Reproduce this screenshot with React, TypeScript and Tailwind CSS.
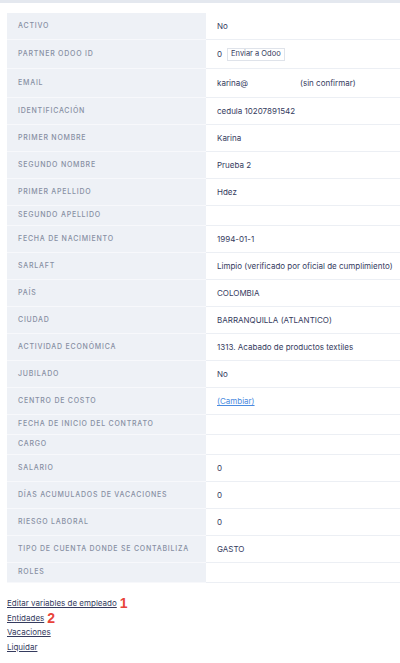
import React from 'react'

type Row = {
  label: string
  value?: React.ReactNode
  tall?: boolean
}

const ROWS: Row[] = [
  { label: 'Activo', value: 'No' },
  {
    label: 'Partner Odoo ID',
    tall: true,
    value: (
      <span className="flex items-center gap-[5px]">
        0
        <span className="border border-[#dfe3ea] bg-white px-[3px] h-[13px] flex items-center text-[7.5px]">
          Enviar a Odoo
        </span>
      </span>
    ),
  },
  {
    label: 'Email',
    tall: true,
    value: (
      <span className="flex items-center">
        <span className="w-[83px]">karina@</span>
        <span>(sin confirmar)</span>
      </span>
    ),
  },
  { label: 'Identificación', value: 'cedula 10207891542' },
  { label: 'Primer nombre', value: 'Karina' },
  { label: 'Segundo nombre', value: 'Prueba 2' },
  { label: 'Primer apellido', value: 'Hdez' },
  { label: 'Segundo apellido' },
  { label: 'Fecha de nacimiento', value: '1994-01-1' },
  { label: 'Sarlaft', value: 'Limpio (verificado por oficial de cumplimiento)' },
  { label: 'País', value: 'COLOMBIA' },
  { label: 'Ciudad', value: 'BARRANQUILLA (ATLANTICO)' },
  { label: 'Actividad económica', value: '1313. Acabado de productos textiles' },
  { label: 'Jubilado', value: 'No' },
  {
    label: 'Centro de costo',
    value: <a className="text-[#4a8be0] underline">(Cambiar)</a>,
  },
  { label: 'Fecha de inicio del contrato' },
  { label: 'Cargo' },
  { label: 'Salario', value: '0' },
  { label: 'Días acumulados de vacaciones', value: '0' },
  { label: 'Riesgo laboral', value: '0' },
  { label: 'Tipo de cuenta donde se contabiliza', value: 'GASTO' },
  { label: 'Roles' },
]

function DetailRow({ row }: { row: Row }) {
  const height = row.value === undefined ? 'h-[20px]' : row.tall ? 'h-[29px]' : 'h-[27px]'
  return (
    <div className={`flex ${height}`}>
      <div className="w-[199px] shrink-0 bg-[#eef1f6] border-b border-[#f7f8fb] flex items-center pl-[11px] text-[7px] font-medium tracking-[0.11em] uppercase text-[#878fa3]">
        {row.label}
      </div>
      <div className="flex-1 border-b border-[#eceff4] flex items-center pl-[11px] text-[8px] text-[#353b5e]">
        {row.value}
      </div>
    </div>
  )
}

const LINKS = [
  { text: 'Editar variables de empleado', badge: '1' },
  { text: 'Entidades', badge: '2' },
  { text: 'Vacaciones' },
  { text: 'Liquidar' },
]

export default function App() {
  return (
    <div className="w-[400px] h-[663px] bg-white overflow-hidden font-['Inter',sans-serif]">
      <div className="h-[3px] bg-[#e4e8ef]" />
      <div className="ml-[7px] mt-[10px]">
        {ROWS.map((row) => (
          <DetailRow key={row.label} row={row} />
        ))}
      </div>
      <div className="ml-[7px] mt-[13px] flex flex-col">
        {LINKS.map((link) => (
          <div key={link.text} className="flex items-center h-[14.6px]">
            <a className="text-[8px] text-[#353b5e] underline">{link.text}</a>
            {link.badge && (
              <span className="ml-[3px] text-[14px] leading-none font-bold text-[#e8433a] font-['Liberation_Sans',sans-serif]">
                {link.badge}
              </span>
            )}
          </div>
        ))}
      </div>
    </div>
  )
}
